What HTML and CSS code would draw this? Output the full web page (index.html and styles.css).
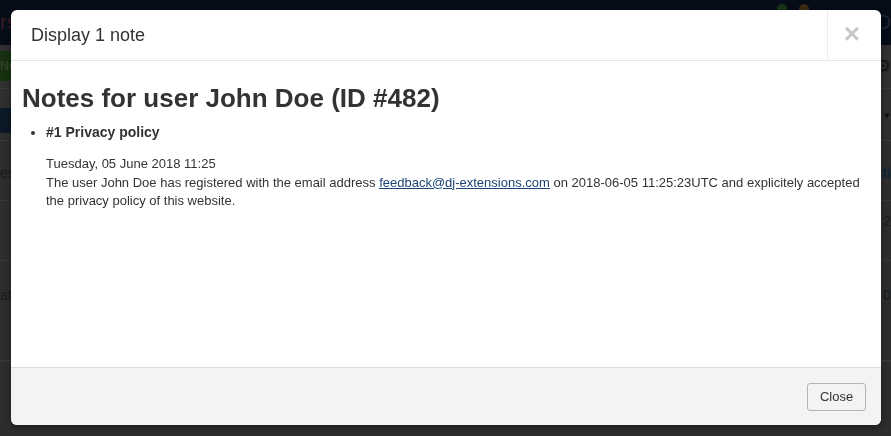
FILE: index.html
```html
<!DOCTYPE html>
<html lang="en">
<head>
<meta charset="utf-8">
<title>Display 1 note</title>
<link rel="stylesheet" href="styles.css">
</head>
<body>
<div class="page">
  <header class="navbar">
    <span class="brand">rs</span>
    <span class="nav-dots"><i class="dot green"></i><i class="dot orange"></i></span>
    <span class="nav-user">O</span>
  </header>
  <div class="toolbar">
    <span class="btn-new">Ne</span>
    <span class="gear">&#9881;</span>
  </div>
  <div class="subbar">
    <span class="navy"></span>
    <span class="caret">&#9662;</span>
  </div>
  <div class="content">
    <div class="row r1"><span>ess</span><span class="blue">ti</span></div>
    <div class="row r2"><span></span><span>2</span></div>
    <div class="row r3"><span>ate</span><span>0</span></div>
  </div>
</div>

<div class="modal">
  <div class="modal-header">
    <h3 class="modal-title">Display 1 note</h3>
    <button class="modal-x" type="button" aria-label="Close">&times;</button>
  </div>
  <div class="modal-body">
    <h1 class="notes-title">Notes for user John Doe (ID #482)</h1>
    <ul class="notes">
      <li>
        <h4 class="note-title">#1 Privacy policy</h4>
        <div class="note-text">
          Tuesday, 05 June 2018 11:25<br>
          The user John Doe has registered with the email address <a href="#">feedback@dj-extensions.com</a> on 2018-06-05 11:25:23UTC and explicitely accepted the privacy policy of this website.
        </div>
      </li>
    </ul>
  </div>
  <div class="modal-footer">
    <button class="btn" type="button">Close</button>
  </div>
</div>
</body>
</html>
```

FILE: styles.css
```css
* { box-sizing: border-box; }
html, body { margin: 0; padding: 0; }
body {
  width: 891px;
  height: 436px;
  overflow: hidden;
  background: #2d2d2d;
  font-family: "Liberation Sans", Arial, sans-serif;
  font-size: 13px;
  color: #333;
}
.page {
  height: 436px;
  display: flex;
  flex-direction: column;
}
.navbar {
  height: 52px;
  background: #060c18;
  display: flex;
  align-items: center;
}
.brand {
  font-size: 20px;
  color: #3b1c22;
}
.nav-dots { margin-left: auto; margin-right: 66px; display: flex; gap: 12px; align-self: flex-start; margin-top: 4px; }
.dot { width: 10px; height: 10px; border-radius: 50%; display: block; }
.dot.green { background: #163516; }
.dot.orange { background: #3a2a14; }
.nav-user { color: #1e2533; font-size: 20px; }
.toolbar {
  height: 50px;
  background: #303030;
  border-bottom: 1px solid #3a3a3a;
  display: flex;
  align-items: center;
  justify-content: space-between;
}
.btn-new {
  background: #17300f;
  color: #3a4a36;
  height: 30px;
  line-height: 30px;
  width: 18px;
  font-size: 12px;
}
.gear { color: #141414; font-size: 18px; }
.subbar {
  height: 60px;
  background: #2f2f2f;
  border-bottom: 1px solid #3a3a3a;
  display: flex;
  align-items: flex-end;
  justify-content: space-between;
}
.navy { width: 14px; height: 25px; background: #0b1826; margin-bottom: 7px; }
.caret { color: #111; font-size: 11px; margin-right: 1px; margin-bottom: 18px; }
.content { flex: 1; background: #2d2d2d; border-bottom: 1px solid #3a3a3a; margin-bottom: 74px; }
.row {
  display: flex;
  justify-content: space-between;
  border-bottom: 1px solid #373737;
  color: #1a1a1a;
  font-size: 14px;
}
.row .blue { color: #0f2438; font-weight: bold; }
.r1 { height: 60px; padding-top: 24px; }
.r2 { height: 60px; padding-top: 12px; }
.r3 { height: 100px; padding-top: 26px; }

.modal {
  position: fixed;
  left: 11px;
  top: 10px;
  width: 870px;
  height: 415px;
  background: #fff;
  border-radius: 6px;
  box-shadow: 0 3px 7px rgba(0,0,0,0.35);
  display: flex;
  flex-direction: column;
  overflow: hidden;
}
.modal-header {
  height: 51px;
  border-bottom: 1px solid #e5e5e5;
  display: flex;
  align-items: stretch;
}
.modal-title {
  margin: 0;
  flex: 1;
  padding: 0 20px;
  font-size: 18px;
  font-weight: normal;
  line-height: 50px;
  color: #333;
}
.modal-x {
  width: 54px;
  border: 0;
  border-left: 1px solid #eee;
  background: transparent;
  color: #c8c8c8;
  font-family: "Liberation Sans", Arial, sans-serif;
  font-size: 28px;
  font-weight: bold;
  line-height: 1;
  padding: 0 5px 2px 0;
  cursor: pointer;
}
.modal-body {
  flex: 1;
  padding: 17px 11px 0 11px;
}
.notes-title {
  margin: 0 0 5px 0;
  font-size: 26px;
  font-weight: bold;
  line-height: 40px;
  color: #333;
}
.notes {
  margin: 0;
  padding-left: 24px;
}
.note-title {
  margin: 0 0 14px 0;
  font-size: 14px;
  line-height: 18px;
  font-weight: bold;
}
.note-text {
  line-height: 18.5px;
}
.note-text a { color: #1b4476; text-decoration: underline; }
.modal-footer {
  height: 58px;
  background: #f3f3f3;
  border-top: 1px solid #ddd;
  display: flex;
  justify-content: flex-end;
  align-items: center;
  padding: 0 15px 0 0;
}
.btn {
  height: 28px;
  width: 59px;
  font-family: "Liberation Sans", Arial, sans-serif;
  font-size: 13px;
  color: #333;
  background: #f3f3f3;
  border: 1px solid #b3b3b3;
  border-radius: 3px;
  padding: 0;
}
```
